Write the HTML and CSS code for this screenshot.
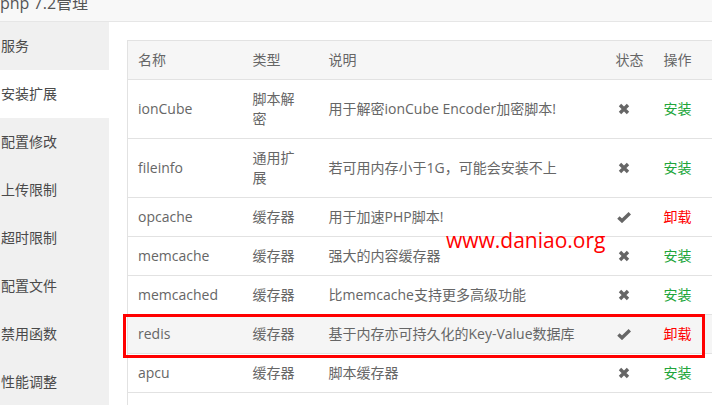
FILE: index.html
```html
<!DOCTYPE html>
<html lang="zh-CN">
<head>
<meta charset="utf-8">
<title>php 7.2管理</title>
<link rel="stylesheet" href="styles.css">
</head>
<body>
<div class="page">
  <header class="top"><span class="title">php 7.2管理</span></header>
  <div class="body">
    <nav class="side">
      <div class="item">服务</div>
      <div class="item active">安装扩展</div>
      <div class="item">配置修改</div>
      <div class="item">上传限制</div>
      <div class="item">超时限制</div>
      <div class="item">配置文件</div>
      <div class="item">禁用函数</div>
      <div class="item">性能调整</div>
    </nav>
    <main class="main">
      <div class="tablewrap">
        <table class="ext">
          <colgroup>
            <col class="c1"><col class="c2"><col class="c3"><col class="c4"><col class="c5">
          </colgroup>
          <thead>
            <tr><th>名称</th><th>类型</th><th>说明</th><th>状态</th><th>操作</th></tr>
          </thead>
          <tbody>
            <tr><td>ionCube</td><td>脚本解密</td><td>用于解密ionCube Encoder加密脚本!</td><td><svg class="ic" viewBox="0 0 12 12"><path d="M2 2L10 10M10 2L2 10"/></svg></td><td><a class="ok">安装</a></td></tr>
            <tr><td>fileinfo</td><td>通用扩展</td><td>若可用内存小于1G，可能会安装不上</td><td><svg class="ic" viewBox="0 0 12 12"><path d="M2 2L10 10M10 2L2 10"/></svg></td><td><a class="ok">安装</a></td></tr>
            <tr><td>opcache</td><td>缓存器</td><td>用于加速PHP脚本!</td><td><svg class="ic chk" viewBox="0 0 14 12"><path d="M1.4 6.4L5 9.8L12.8 2.2"/></svg></td><td><a class="del">卸载</a></td></tr>
            <tr><td>memcache</td><td>缓存器</td><td>强大的内容缓存器</td><td><svg class="ic" viewBox="0 0 12 12"><path d="M2 2L10 10M10 2L2 10"/></svg></td><td><a class="ok">安装</a></td></tr>
            <tr><td>memcached</td><td>缓存器</td><td>比memcache支持更多高级功能</td><td><svg class="ic" viewBox="0 0 12 12"><path d="M2 2L10 10M10 2L2 10"/></svg></td><td><a class="ok">安装</a></td></tr>
            <tr class="hover"><td>redis</td><td>缓存器</td><td>基于内存亦可持久化的Key-Value数据库</td><td><svg class="ic chk" viewBox="0 0 14 12"><path d="M1.4 6.4L5 9.8L12.8 2.2"/></svg></td><td><a class="del">卸载</a></td></tr>
            <tr><td>apcu</td><td>缓存器</td><td>脚本缓存器</td><td><svg class="ic" viewBox="0 0 12 12"><path d="M2 2L10 10M10 2L2 10"/></svg></td><td><a class="ok">安装</a></td></tr>
            <tr><td>&nbsp;</td><td></td><td></td><td></td><td></td></tr>
          </tbody>
        </table>
        <div class="mark">www.daniao.org</div>
        <div class="frame"></div>
      </div>
    </main>
  </div>
</div>
</body>
</html>
```
FILE: styles.css
```css
html, body {
  margin: 0;
  padding: 0;
  background: #fff;
  overflow: hidden;
}
body {
  font-family: "Open Sans", "Noto Sans CJK SC", sans-serif;
  font-size: 14px;
  color: #666;
}
.page {
  width: 712px;
  height: 405px;
  overflow: hidden;
  display: flex;
  flex-direction: column;
}
.top {
  height: 21px;
  flex: none;
  background: #f8f8f8;
  border-bottom: 1px solid #e6e6e6;
  overflow: hidden;
}
.title {
  display: block;
  margin-top: -9px;
  font-size: 16px;
  line-height: 24px;
  color: #555;
}
.body {
  display: flex;
  flex: 1;
  min-height: 0;
}
.side {
  width: 109px;
  flex: none;
  background: #f0f0f0;
  display: flex;
  flex-direction: column;
}
.item {
  height: 48px;
  line-height: 48px;
  padding-left: 1px;
  color: #4a4a4a;
  font-size: 14px;
}
.item.active {
  background: #fff;
}
.main {
  flex: 1;
  padding: 18px 0 0 18px;
  min-width: 0;
}
.tablewrap {
  position: relative;
  width: 600px;
}
.ext {
  width: 600px;
  table-layout: fixed;
  border-collapse: collapse;
  border: 1px solid #e2e2e2;
  border-right: 0;
}
.c1 { width: 115px; }
.c2 { width: 76px; }
.c3 { width: 287px; }
.c4 { width: 48px; }
.c5 { width: 74px; }
.ext th, .ext td {
  padding: 9px 10px;
  line-height: 20px;
  text-align: left;
  font-weight: normal;
  vertical-align: middle;
  border-bottom: 1px solid #e2e2e2;
}
.ext td:nth-child(2) {
  padding-right: 13px;
}
.ext thead th {
  background: #f6f6f6;
  color: #666;
}
.ext tr.hover td {
  background: #f5f5f5;
}
.ic {
  display: block;
  width: 12px;
  height: 12px;
  margin-left: 2px;
  fill: none;
  stroke: #666;
  stroke-width: 3.4;
}
.ic.chk {
  width: 14px;
  margin-left: 1px;
}
.ok { color: #20a53a; }
.del { color: #ff0000; }
.mark {
  position: absolute;
  left: 319px;
  top: 186px;
  font-family: "Open Sans", sans-serif;
  font-size: 21px;
  line-height: 28px;
  color: #ff0000;
}
.frame {
  position: absolute;
  left: -4px;
  top: 274px;
  width: 582px;
  height: 44px;
  box-sizing: border-box;
  border: 3px solid #ff0000;
}
```
